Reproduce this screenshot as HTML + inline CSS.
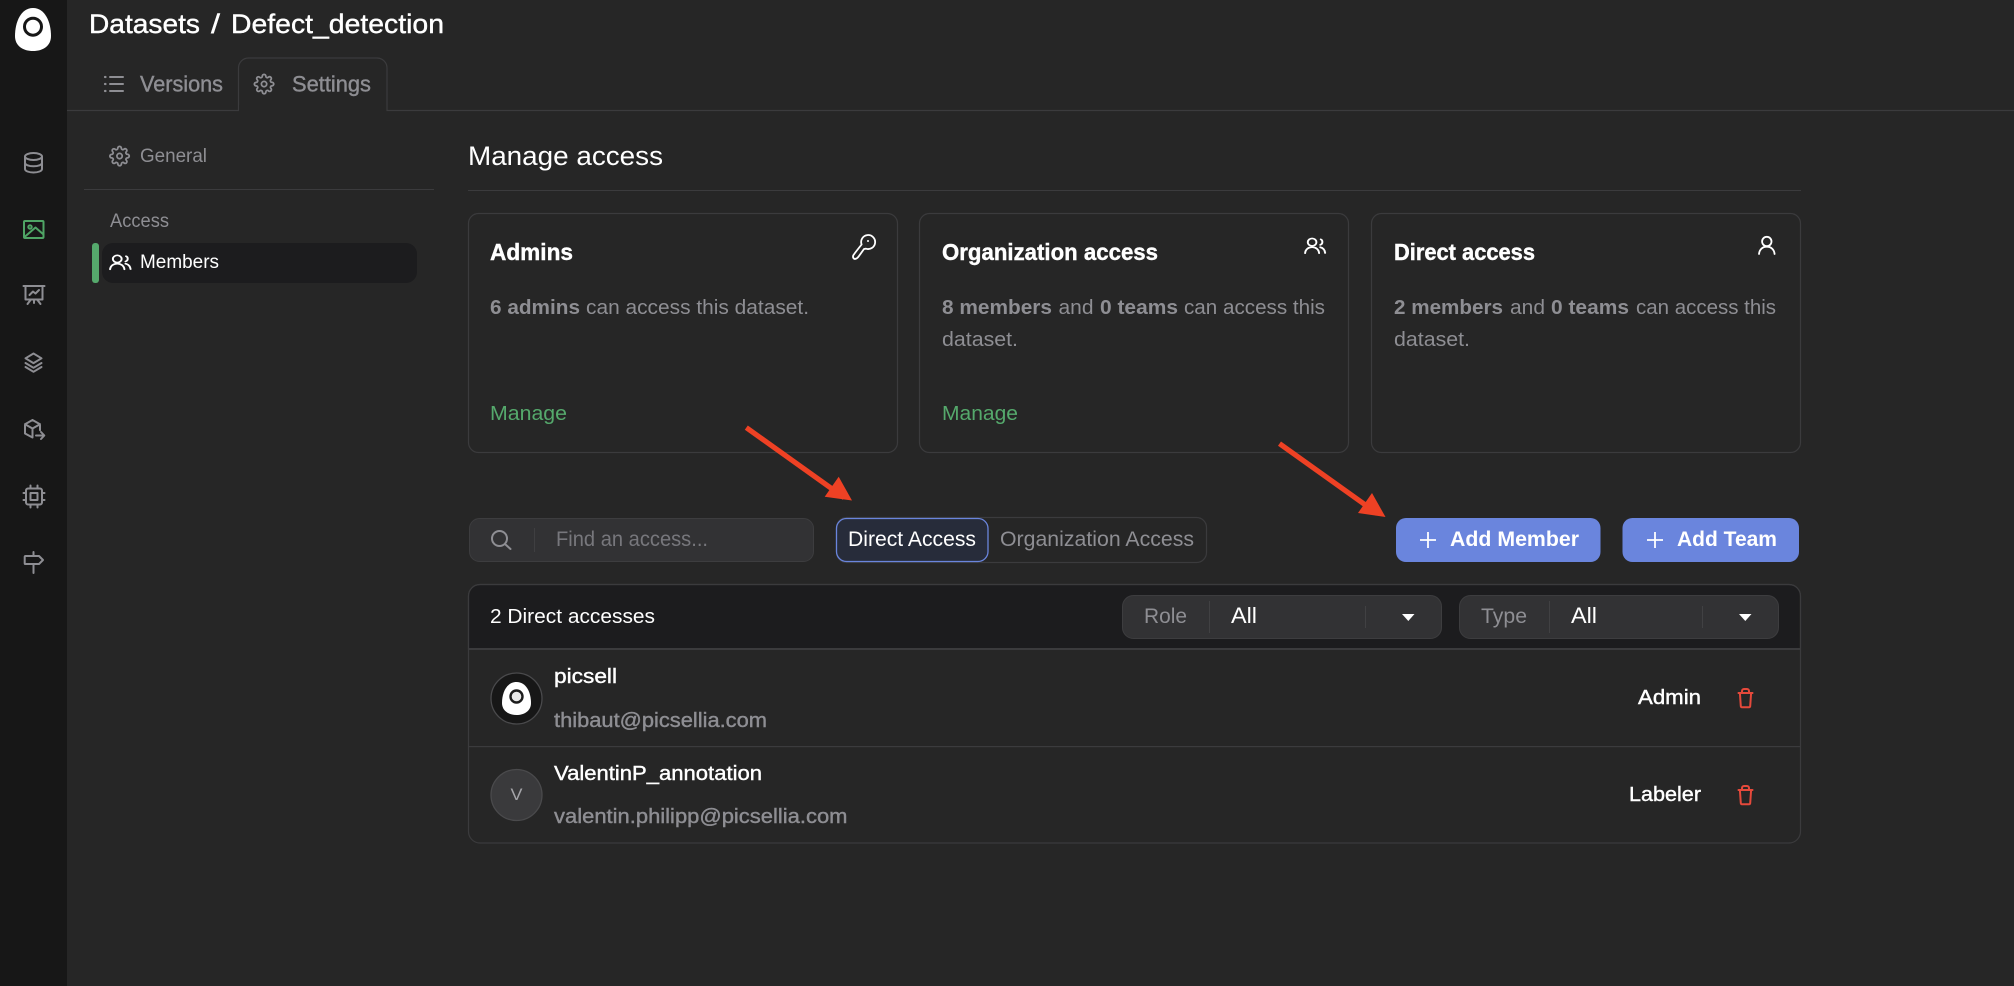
<!DOCTYPE html>
<html lang="en">
<head>
<meta charset="utf-8">
<title>Manage access</title>
<style>
html,body{margin:0;padding:0;background:#262626;width:2014px;height:986px;overflow:hidden}
svg{display:block}
text{font-family:"Liberation Sans",sans-serif;fill:#fff;font-size:20px}
.g{fill:#8e8e93}
.b{font-weight:700}
.m{stroke:#fff;stroke-width:.4px}
.gm{fill:#8e8e93;stroke:#8e8e93;stroke-width:.4px}
.ic{fill:none;stroke:#8e8e93;stroke-width:2;stroke-linecap:round;stroke-linejoin:round}
.wi{fill:none;stroke:#fff;stroke-width:1.8;stroke-linecap:round;stroke-linejoin:round}
.ln{fill:none;stroke:#3b3b3d;stroke-width:1.2}
</style>
</head>
<body>
<svg xmlns="http://www.w3.org/2000/svg" width="2014" height="986" viewBox="0 0 2014 986">
<defs>
<path id="gear" d="M19.4 15a1.65 1.65 0 0 0 .33 1.82l.06.06a2 2 0 0 1 0 2.83 2 2 0 0 1-2.83 0l-.06-.06a1.65 1.65 0 0 0-1.82-.33 1.65 1.65 0 0 0-1 1.51V21a2 2 0 0 1-2 2 2 2 0 0 1-2-2v-.09A1.65 1.65 0 0 0 9 19.4a1.65 1.65 0 0 0-1.82.33l-.06.06a2 2 0 0 1-2.83 0 2 2 0 0 1 0-2.83l.06-.06a1.65 1.65 0 0 0 .33-1.82 1.65 1.65 0 0 0-1.51-1H3a2 2 0 0 1-2-2 2 2 0 0 1 2-2h.09A1.65 1.65 0 0 0 4.6 9a1.65 1.65 0 0 0-.33-1.82l-.06-.06a2 2 0 0 1 0-2.83 2 2 0 0 1 2.83 0l.06.06a1.65 1.65 0 0 0 1.82.33H9a1.65 1.65 0 0 0 1-1.51V3a2 2 0 0 1 2-2 2 2 0 0 1 2 2v.09a1.65 1.65 0 0 0 1 1.51 1.65 1.65 0 0 0 1.82-.33l.06-.06a2 2 0 0 1 2.83 0 2 2 0 0 1 0 2.83l-.06.06a1.65 1.65 0 0 0-.33 1.82V9a1.65 1.65 0 0 0 1.51 1H21a2 2 0 0 1 2 2 2 2 0 0 1-2 2h-.09a1.65 1.65 0 0 0-1.51 1z M15 12a3 3 0 1 1-6 0 3 3 0 0 1 6 0z"/>
<path id="trash" d="M1 5h14 M4.500 5V3a2 2 0 0 1 2-2h3a2 2 0 0 1 2 2v2 M2.400 5l.9 13.200a1.200 1.200 0 0 0 1.200 1h7a1.200 1.200 0 0 0 1.200-1l.9-13.200"/>
<path id="people" d="M1 17c.4-4 3-6.300 6.500-6.300S13.600 13 14 17 M11.500 5.500a4 4 0 1 1-8 0 4 4 0 0 1 8 0z M15.500 2.500c2 .8 2.200 4.800-.5 5.800 M15 10.800c2.500.6 4.200 2.800 4.600 6"/>
</defs>

<rect width="2014" height="986" fill="#262626"/>
<rect width="67" height="986" fill="#171717"/>

<!-- logo -->
<path d="M33 8C45 8 51 22 51 36 51 46 43 51 33 51 23 51 15 46 15 36 15 22 21 8 33 8z" fill="#fff"/>
<circle cx="33" cy="26.700" r="8.500" fill="#fff" stroke="#171717" stroke-width="3"/>

<!-- rail icons -->
<g class="ic" transform="translate(24.500 153)">
<ellipse cx="9" cy="3.500" rx="8.500" ry="3.500"/><path d="M.5 3.500v12.500c0 2 3.800 3.500 8.500 3.500s8.500-1.500 8.500-3.500V3.500 M.5 9.800c0 2 3.800 3.500 8.500 3.500s8.500-1.500 8.500-3.500"/>
</g>
<g fill="none" stroke="#4fa565" stroke-width="2" stroke-linecap="round" stroke-linejoin="round" transform="translate(24 221)">
<rect x="0" y="0" width="19.500" height="17" rx="1"/><circle cx="6" cy="6" r="1.700"/><path d="M.5 16L11.500 6.500l8 7"/>
</g>
<g class="ic" transform="translate(23.500 285)">
<path d="M0 1h21 M2 1v13.500h17V1 M6 10l3.500-3.500 2.500 2L15.500 5 M7 15l-3 4 M10.500 15v3 M14 15l3 4"/>
</g>
<g class="ic" transform="translate(25 352.500)">
<path d="M8.500 1l8 4.800-8 4.800-8-4.800z M.5 10.500l8 4.800 8-4.800 M.5 14.500l8 4.800 8-4.800"/>
</g>
<g class="ic" transform="translate(23.500 419)">
<path d="M9 1l7.500 4.200v6 M9 1L1.500 5.200v9.300l7.500 4 M1.500 5.200L9 9.500l7.500-4.300 M9 9.500v9 M12.500 16.500h8 M17.500 13l3.300 3.500-3.300 3.500"/>
</g>
<g class="ic" transform="translate(23.500 485.500)">
<rect x="2.500" y="3" width="16" height="16" rx="2"/><rect x="7" y="7.500" width="7" height="7"/><path d="M7 0v3 M14 0v3 M7 19v3 M14 19v3 M0 7.500h2.500 M0 14.500h2.500 M18.500 7.500h2.500 M18.500 14.500h2.500"/>
</g>
<g class="ic" transform="translate(24 552)">
<path d="M9.500 0v4 M9.500 12v9 M1.500 4h13.500l4 4-4 4H1.500a.8.8 0 0 1-.8-.8V4.800a.8.8 0 0 1 .8-.8z"/>
</g>

<!-- header -->
<text x="89" y="33" class="m" style="font-size:27px" textLength="111" lengthAdjust="spacingAndGlyphs">Datasets</text>
<text x="211" y="33" class="m" style="font-size:27px" textLength="9" lengthAdjust="spacingAndGlyphs">/</text>
<text x="231" y="33" class="m" style="font-size:27px" textLength="213" lengthAdjust="spacingAndGlyphs">Defect_detection</text>

<!-- tabs -->
<path d="M67 110.500H238.500V68a10 10 0 0 1 10-10H377a10 10 0 0 1 10 10v42.500H2014" class="ln"/>
<rect x="239.200" y="105" width="147" height="8" fill="#262626"/>
<g class="ic"><path d="M110 77h13 M110 84h13 M110 91h13"/><path d="M105 77h.5 M105 84h.5 M105 91h.5" stroke-width="2.200"/></g>
<text x="140" y="91.500" class="gm" style="font-size:22px" textLength="83" lengthAdjust="spacingAndGlyphs">Versions</text>
<use href="#gear" class="ic" transform="translate(253.500 73.500) scale(.88)"/>
<text x="292" y="91.500" class="gm" style="font-size:22px" textLength="79" lengthAdjust="spacingAndGlyphs">Settings</text>

<!-- left menu -->
<use href="#gear" class="ic" transform="translate(109 145.500) scale(.88)"/>
<text x="140" y="162" class="g" style="font-size:19px" textLength="67" lengthAdjust="spacingAndGlyphs">General</text>
<rect x="84" y="189" width="350" height="1" fill="#3b3b3d"/>
<text x="110" y="227" class="g" style="font-size:19px" textLength="59" lengthAdjust="spacingAndGlyphs">Access</text>
<rect x="92" y="243" width="7" height="40" rx="3" fill="#55a96c"/>
<rect x="102" y="243" width="315" height="40" rx="11" fill="#1c1c1e"/>
<use href="#people" class="wi" transform="translate(109 254) scale(1.100 .9)"/>
<text x="140" y="268" style="font-size:19px" textLength="79" lengthAdjust="spacingAndGlyphs">Members</text>

<!-- main heading -->
<text x="468" y="165" style="font-size:27px" textLength="195" lengthAdjust="spacingAndGlyphs">Manage access</text>
<rect x="468" y="190" width="1333" height="1" fill="#3b3b3d"/>

<!-- cards -->
<rect x="468.500" y="213.500" width="429" height="239" rx="10" class="ln"/>
<rect x="919.500" y="213.500" width="429" height="239" rx="10" class="ln"/>
<rect x="1371.500" y="213.500" width="429" height="239" rx="10" class="ln"/>

<text x="490" y="260" class="m b" style="font-size:23px" textLength="83" lengthAdjust="spacingAndGlyphs">Admins</text>
<g class="wi" transform="translate(852 235)">
<path d="M9.600 9.500A7 7 0 1 1 14 13.700L12 14 7 21Q5 24 2.500 24 .5 23 1.200 20.500Q2 19 9.600 9.500z"/><circle cx="16" cy="6" r="1" fill="#fff" stroke="none"/>
</g>
<text x="490" y="314" class="g b" textLength="90" lengthAdjust="spacingAndGlyphs">6 admins</text>
<text x="586" y="314" class="g" textLength="223" lengthAdjust="spacingAndGlyphs">can access this dataset.</text>
<text x="490" y="420" style="fill:#55a96c" textLength="77" lengthAdjust="spacingAndGlyphs">Manage</text>

<text x="942" y="260" class="m b" style="font-size:23px" textLength="216" lengthAdjust="spacingAndGlyphs">Organization access</text>
<use href="#people" class="wi" transform="translate(1304 237) scale(1.080 .95)"/>
<text x="942" y="314" class="g b" textLength="110" lengthAdjust="spacingAndGlyphs">8 members</text>
<text x="1058.500" y="314" class="g" textLength="35" lengthAdjust="spacingAndGlyphs">and</text>
<text x="1100" y="314" class="g b" textLength="78" lengthAdjust="spacingAndGlyphs">0 teams</text>
<text x="1184" y="314" class="g" textLength="141" lengthAdjust="spacingAndGlyphs">can access this</text>
<text x="942" y="346" class="g" textLength="76" lengthAdjust="spacingAndGlyphs">dataset.</text>
<text x="942" y="420" style="fill:#55a96c" textLength="76" lengthAdjust="spacingAndGlyphs">Manage</text>

<text x="1394" y="260" class="m b" style="font-size:23px" textLength="141" lengthAdjust="spacingAndGlyphs">Direct access</text>
<g class="wi" transform="translate(1758 236)">
<circle cx="8.800" cy="5.500" r="4.700"/><path d="M1 18c.4-4.500 3.500-7.300 7.800-7.300s7.400 2.800 7.800 7.300"/>
</g>
<text x="1394" y="314" class="g b" textLength="109" lengthAdjust="spacingAndGlyphs">2 members</text>
<text x="1510" y="314" class="g" textLength="35" lengthAdjust="spacingAndGlyphs">and</text>
<text x="1551" y="314" class="g b" textLength="78" lengthAdjust="spacingAndGlyphs">0 teams</text>
<text x="1636" y="314" class="g" textLength="140" lengthAdjust="spacingAndGlyphs">can access this</text>
<text x="1394" y="346" class="g" textLength="76" lengthAdjust="spacingAndGlyphs">dataset.</text>

<!-- search -->
<rect x="469.500" y="518.500" width="344" height="43" rx="10" fill="#323234" stroke="#3d3d3f"/>
<g class="ic"><circle cx="499.500" cy="538.500" r="7.500"/><path d="M505.500 544.500l5 4.500"/></g>
<rect x="534" y="528" width="1" height="24" fill="#3f3f41"/>
<text x="556" y="546" style="fill:#77777c;font-size:21px" textLength="152" lengthAdjust="spacingAndGlyphs">Find an access...</text>

<!-- segmented -->
<rect x="836.500" y="517.500" width="370" height="45" rx="10" class="ln"/>
<rect x="836.500" y="518.500" width="151.500" height="43" rx="10" fill="#272c3a" stroke="#6a85dd" stroke-width="1.300"/>
<text x="848" y="546" style="font-size:21px" textLength="128" lengthAdjust="spacingAndGlyphs">Direct Access</text>
<text x="1000" y="546" class="g" style="font-size:21px" textLength="194" lengthAdjust="spacingAndGlyphs">Organization Access</text>

<!-- buttons -->
<rect x="1396" y="518" width="204.500" height="44" rx="10" fill="#6a85dd"/>
<path d="M1428 532v16 M1420 540h16" stroke="#fff" stroke-width="1.800" fill="none"/>
<text x="1450" y="546" class="b" style="font-size:21px" textLength="129" lengthAdjust="spacingAndGlyphs">Add Member</text>
<rect x="1622.500" y="518" width="176.500" height="44" rx="10" fill="#6a85dd"/>
<path d="M1655 532v16 M1647 540h16" stroke="#fff" stroke-width="1.800" fill="none"/>
<text x="1677" y="546" class="b" style="font-size:21px" textLength="100" lengthAdjust="spacingAndGlyphs">Add Team</text>

<!-- table -->
<path d="M468.500 649V596a11.500 11.500 0 0 1 11.500-11.500H1789a11.500 11.500 0 0 1 11.500 11.500V649z" fill="#1c1c1e" stroke="#3b3b3d" stroke-width="1.200"/>
<rect x="468.500" y="584.500" width="1332" height="258.500" rx="11.500" class="ln"/>
<rect x="469" y="648" width="1331" height="2" fill="#3b3b3d"/>
<rect x="469" y="746" width="1331" height="1.200" fill="#3b3b3d"/>
<text x="490" y="623" textLength="165" lengthAdjust="spacingAndGlyphs">2 Direct accesses</text>

<rect x="1122.500" y="595.500" width="319" height="43" rx="11" fill="#323234" stroke="#3d3d3f"/>
<text x="1144" y="623" class="g" style="font-size:21px" textLength="43" lengthAdjust="spacingAndGlyphs">Role</text>
<rect x="1209" y="601" width="1" height="32" fill="#414143"/>
<text x="1231" y="623" style="font-size:22px" textLength="26" lengthAdjust="spacingAndGlyphs">All</text>
<rect x="1365" y="606" width="1" height="22" fill="#414143"/>
<path d="M1402 614h12.500l-6.200 7z" fill="#fff"/>

<rect x="1459.500" y="595.500" width="319" height="43" rx="11" fill="#323234" stroke="#3d3d3f"/>
<text x="1481" y="623" class="g" style="font-size:21px" textLength="46" lengthAdjust="spacingAndGlyphs">Type</text>
<rect x="1549" y="601" width="1" height="32" fill="#414143"/>
<text x="1571" y="623" style="font-size:22px" textLength="26" lengthAdjust="spacingAndGlyphs">All</text>
<rect x="1702" y="606" width="1" height="22" fill="#414143"/>
<path d="M1739 614h12.500l-6.200 7z" fill="#fff"/>

<!-- row 1 -->
<circle cx="516.500" cy="698.500" r="25.500" fill="#171717" stroke="#4a4a4c" stroke-width="1.300"/>
<path d="M516.500 682C526 682 531 692 531 703 531 711 524 715 516.500 715 509 715 502 711 502 703 502 692 507 682 516.500 682z" fill="#fff"/>
<circle cx="516.500" cy="696.500" r="6" fill="#e8e8e8" stroke="#1c1c1c" stroke-width="2.400"/>
<text x="554" y="683" class="m" textLength="63" lengthAdjust="spacingAndGlyphs">picsell</text>
<text x="554" y="727" class="gm" textLength="213" lengthAdjust="spacingAndGlyphs">thibaut@picsellia.com</text>
<text x="1638" y="704" class="m" textLength="63" lengthAdjust="spacingAndGlyphs">Admin</text>
<use href="#trash" fill="none" stroke="#e5493b" stroke-width="2" stroke-linecap="round" stroke-linejoin="round" transform="translate(1737.500 688)"/>

<!-- row 2 -->
<circle cx="516.500" cy="795" r="25.500" fill="#3a3a3c" stroke="#4a4a4c" stroke-width="1.300"/>
<text x="510.500" y="800" style="fill:#a5a5a9;font-size:17px" textLength="12" lengthAdjust="spacingAndGlyphs">V</text>
<text x="554" y="780" class="m" textLength="208" lengthAdjust="spacingAndGlyphs">ValentinP_annotation</text>
<text x="554" y="823" class="gm" textLength="293.500" lengthAdjust="spacingAndGlyphs">valentin.philipp@picsellia.com</text>
<text x="1629" y="801" class="m" textLength="72" lengthAdjust="spacingAndGlyphs">Labeler</text>
<use href="#trash" fill="none" stroke="#e5493b" stroke-width="2" stroke-linecap="round" stroke-linejoin="round" transform="translate(1737.500 785)"/>

<!-- arrows -->
<g fill="#ee4124" stroke="none">
<path d="M747.800 425.500l98 70-3 4.200-98-70z"/><path d="M852 500.500L838.700 476.700 824.700 496.700z"/>
<path d="M1281 441.500l98 70-3 4.200-98-70z"/><path d="M1385.500 517L1372 493 1358 513z"/>
</g>
</svg>
</body>
</html>
